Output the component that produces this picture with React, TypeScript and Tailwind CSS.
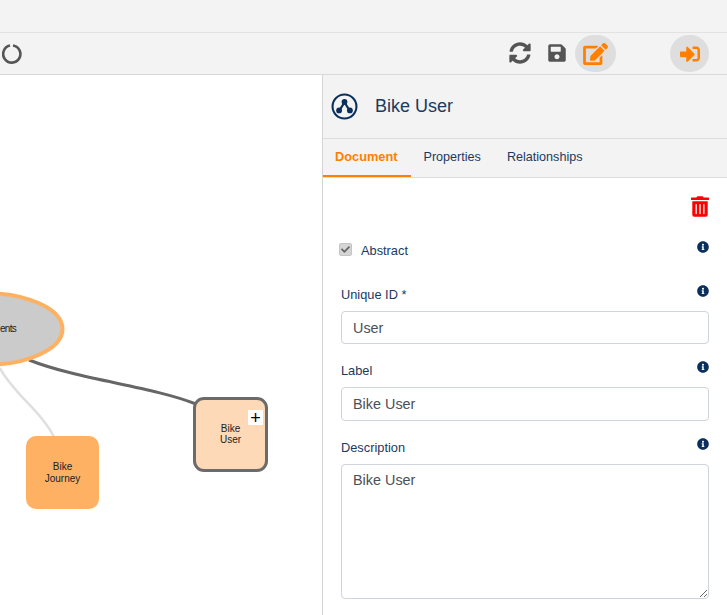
import { FaSyncAlt, FaSave, FaEdit, FaSignInAlt, FaTrashAlt, FaInfoCircle, FaCheck } from "react-icons/fa";

const navy = "text-[#1a3a5f]";

function Info({ className }: { className: string }) {
  return <FaInfoCircle className={`text-[#0b2f5c] w-3 h-3 ${className}`} />;
}

function Field({ label, value, className, inputClass }: { label: string; value: string; className?: string; inputClass: string }) {
  return (
    <div className={className}>
      <div className="flex justify-between items-start h-[22px]">
        <label className={`text-[12.8px] leading-[22px] ${navy}`}>{label}</label>
        <Info className="mt-[1px]" />
      </div>
      <input
        readOnly
        value={value}
        className={`mt-[5px] block w-full px-[11px] rounded-[4px] border border-[#ced4da] bg-white text-[14.4px] text-[#495057] outline-none ${inputClass}`}
      />
    </div>
  );
}

function Canvas() {
  return (
    <div className="relative w-[322px] h-full shrink-0 overflow-hidden bg-white">
      <svg className="absolute inset-0 w-full h-full" viewBox="0 75 322 540" fill="none">
        <path d="M0 368 C 12 392, 42 412, 54 437" stroke="#dfdfdf" strokeWidth="2.5" />
        <path d="M29 360 C 80 380, 150 386, 196 404" stroke="#666666" strokeWidth="3" />
        <ellipse cx="-15.5" cy="329" rx="78" ry="36" fill="#cbcbcb" stroke="#ffb163" strokeWidth="4" />
      </svg>
      <div className="absolute left-0 top-[248px] text-[10px] leading-[12px] tracking-[-0.7px] text-[#222] whitespace-nowrap">
        ents
      </div>
      <div className="absolute left-[26px] top-[361px] w-[73px] h-[73px] rounded-[10px] bg-[#ffb163] flex items-center justify-center text-center text-[10px] leading-[12px] text-[#222]">
        <span>Bike<br />Journey</span>
      </div>
      <div className="absolute left-[193px] top-[322px] w-[75px] h-[75px] rounded-[11px] border-[3px] border-[#6b6b6b] bg-[#fdd9b8] flex items-center justify-center text-center text-[10px] leading-[11px] text-[#222]">
        <span className="pb-[2px]">Bike<br />User</span>
        <div className="absolute right-[2px] top-[10px] w-[15px] h-[15px] bg-white flex items-center justify-center text-[18px] leading-none font-light text-black">
          +
        </div>
      </div>
    </div>
  );
}

function Panel() {
  return (
    <div className="w-[405px] h-full shrink-0 border-l border-[#d4d4d4] bg-white flex flex-col">
      <div className="h-[64px] bg-[#f3f3f3] border-b border-[#dcdcdc] flex items-center pl-[8px] shrink-0">
        <svg viewBox="0 0 26 26" className="w-[27px] h-[27px]" fill="none">
          <circle cx="13" cy="13" r="11.5" stroke="#0b2f5c" strokeWidth="2" />
          <path d="M13 9 L8 17 M13 9 L18 17" stroke="#0b2f5c" strokeWidth="2" />
          <circle cx="13" cy="8.5" r="2.8" fill="#0b2f5c" />
          <circle cx="7.8" cy="16.8" r="2.8" fill="#0b2f5c" />
          <circle cx="18.2" cy="16.8" r="2.8" fill="#0b2f5c" />
        </svg>
        <span className={`ml-[17px] text-[18px] ${navy}`}>Bike User</span>
      </div>
      <div className="h-[39px] bg-[#f3f3f3] border-b border-[#dcdcdc] flex text-[12.6px] shrink-0">
        <div className="w-[88px] h-[38px] border-b-2 border-[#ff7f00] font-bold text-[12.8px] text-[#ff7f00] pl-[12px] leading-[36px]">Document</div>
        <div className={`pl-[12.5px] leading-[36px] ${navy}`}>Properties</div>
        <div className={`pl-[26px] leading-[36px] ${navy}`}>Relationships</div>
      </div>
      <div className="flex-1 px-[18px]">
        <div className="flex justify-end pt-[18px] h-[38px]">
          <FaTrashAlt className="text-[#ff0000] w-[18px] h-[21px]" />
        </div>
        <div className="flex justify-between items-start mt-[21px] h-[22px]">
          <div className="flex items-center -ml-[2px]">
            <span className="w-[13px] h-[13px] rounded-[2px] bg-[#d5d5d5] border border-[#c4c4c4] flex items-center justify-center">
              <FaCheck className="text-[#666] w-[9px] h-[9px]" />
            </span>
            <span className={`ml-[9px] text-[12.8px] leading-[22px] mt-[3px] ${navy}`}>Abstract</span>
          </div>
          <Info className="mt-[4px]" />
        </div>
        <Field className="mt-[25px]" inputClass="h-[33px]" label="Unique ID *" value="User" />
        <Field className="mt-[16px]" inputClass="h-[34px]" label="Label" value="Bike User" />
        <div className="mt-[16px]">
          <div className="flex justify-between items-start h-[22px]">
            <label className={`text-[12.8px] leading-[22px] ${navy}`}>Description</label>
            <Info className="mt-[1px]" />
          </div>
          <textarea
            readOnly
            value="Bike User"
            className="mt-[5px] block w-full h-[135px] px-[11px] py-[5px] rounded-[4px] border border-[#ced4da] bg-white text-[14.4px] text-[#495057] outline-none resize-y"
          />
        </div>
      </div>
    </div>
  );
}

export default function App() {
  return (
    <div className="w-[727px] h-[615px] overflow-hidden flex flex-col bg-white font-['Liberation_Sans',Arial,sans-serif]">
      <div className="h-[33px] bg-[#f3f3f3] border-b border-[#e2e2e2] shrink-0" />
      <div className="h-[42px] bg-[#f3f3f3] border-b border-[#d8d8d8] shrink-0 flex items-center relative">
        <svg viewBox="0 0 20 20" className="ml-[2px] w-[20px] h-[20px]" fill="none">
          <path d="M11 1.5 A8.6 8.6 0 1 1 8 1.6" stroke="#555555" strokeWidth="2.6" />
        </svg>
        <FaSyncAlt className="absolute left-[509px] top-[9px] w-[22px] h-[22px] text-[#555]" />
        <FaSave className="absolute left-[547px] top-[10px] w-[20px] h-[20px] text-[#555]" />
        <div className="absolute left-[575px] top-[2px] w-[41px] h-[37px] rounded-full bg-[#dedede] flex items-center justify-center">
          <FaEdit className="w-[25px] h-[22px] text-[#ff7f00]" />
        </div>
        <div className="absolute left-[670px] top-[2px] w-[39px] h-[37px] rounded-full bg-[#dedede] flex items-center justify-center">
          <FaSignInAlt className="w-[20px] h-[20px] text-[#ff7f00]" />
        </div>
      </div>
      <div className="flex-1 flex min-h-0">
        <Canvas />
        <Panel />
      </div>
    </div>
  );
}
